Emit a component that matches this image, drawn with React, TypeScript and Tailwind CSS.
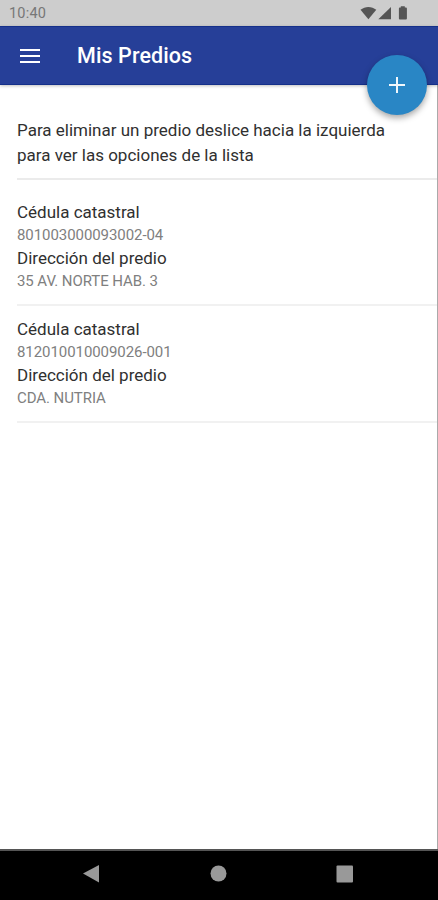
const properties = [
  { id: '801003000093002-04', address: '35 AV. NORTE HAB. 3' },
  { id: '812010010009026-001', address: 'CDA. NUTRIA' },
];

function StatusBar() {
  return (
    <div className="flex h-[26px] shrink-0 items-center justify-between bg-[#cdcdcd] pl-[9px] pr-[30px] text-[#777]">
      <span className="pt-[3px] text-[14.5px] leading-none tracking-[0.2px]">10:40</span>
      <svg className="h-[14px] w-[48px]" viewBox="0 0 48 14" fill="#555">
        <path d="M0.500 3.800C5 -0.100 11.800 -0.100 16.300 3.800L8.400 13.300Z" />
        <path d="M31 1V13.300H18.300Z" />
        <path d="M40.800 1.500V0.300H44.800V1.500H46Q46.900 1.500 46.900 2.400V12.600Q46.900 13.500 46 13.500H39.800Q38.900 13.500 38.900 12.600V2.400Q38.900 1.500 39.800 1.500Z" />
      </svg>
    </div>
  );
}

function AppBar() {
  return (
    <header className="relative flex h-[59px] shrink-0 items-center border-t border-b border-[#15308a] bg-[#263f98] pl-5 shadow-[0_1px_3px_rgba(0,0,0,0.25)]">
      <svg className="h-[14px] w-5" viewBox="0 0 20 14" fill="#fff">
        <rect y="0" width="20" height="2" />
        <rect y="6" width="20" height="2" />
        <rect y="12" width="20" height="2" />
      </svg>
      <h1 className="ml-[37px] text-[21.5px] font-medium leading-none tracking-[0.1px] text-white">Mis Predios</h1>
      <button
        aria-label="Agregar predio"
        className="absolute right-[11px] top-[28px] flex size-[60px] items-center justify-center rounded-full bg-[#2986c5] shadow-[0_3px_6px_rgba(0,0,0,0.35)]"
      >
        <svg className="size-4" viewBox="0 0 16 16" fill="#f0f7fc">
          <path d="M7 0H9V7H16V9H9V16H7V9H0V7H7Z" />
        </svg>
      </button>
    </header>
  );
}

export default function App() {
  return (
    <div className="flex h-[900px] w-[438px] flex-col overflow-hidden bg-white font-[Roboto,sans-serif]">
      <StatusBar />
      <AppBar />
      <main className="flex-1 border-r border-[#aaa] pl-[17px]">
        <p className="h-[95px] whitespace-nowrap border-b-2 border-[#ebebeb] pt-[33px] text-[17px] leading-[25px] text-[#303030]">
          Para eliminar un predio deslice hacia la izquierda
          <br />
          para ver las opciones de la lista
        </p>
        <ul>
          {properties.map((item, index) => (
            <li
              key={item.id}
              className={`flex flex-col whitespace-nowrap border-b-2 border-[#f1f1f1] ${index === 0 ? 'h-[126px] pt-[21px]' : 'h-[117px] pt-3'}`}
            >
              <span className="h-[23px] text-[17px] leading-[23px] text-[#303030]">Cédula catastral</span>
              <span className="h-[23px] text-[15px] leading-[23px] tracking-[-0.07px] text-[#808080]">{item.id}</span>
              <span className="h-[23px] text-[17px] leading-[23px] text-[#303030]">Dirección del predio</span>
              <span className="h-[23px] text-[15px] leading-[23px] tracking-[-0.07px] text-[#808080]">{item.address}</span>
            </li>
          ))}
        </ul>
      </main>
      <nav className="h-[51px] shrink-0 border-t-2 border-[#555] bg-black">
        <svg className="h-[49px] w-full" viewBox="0 0 438 49" fill="#999">
          <path d="M83 22.500L99 14V31.500Z" />
          <circle cx="218.500" cy="22.500" r="8" />
          <rect x="336.500" y="14.500" width="16.500" height="17" rx="1" />
        </svg>
      </nav>
    </div>
  );
}
